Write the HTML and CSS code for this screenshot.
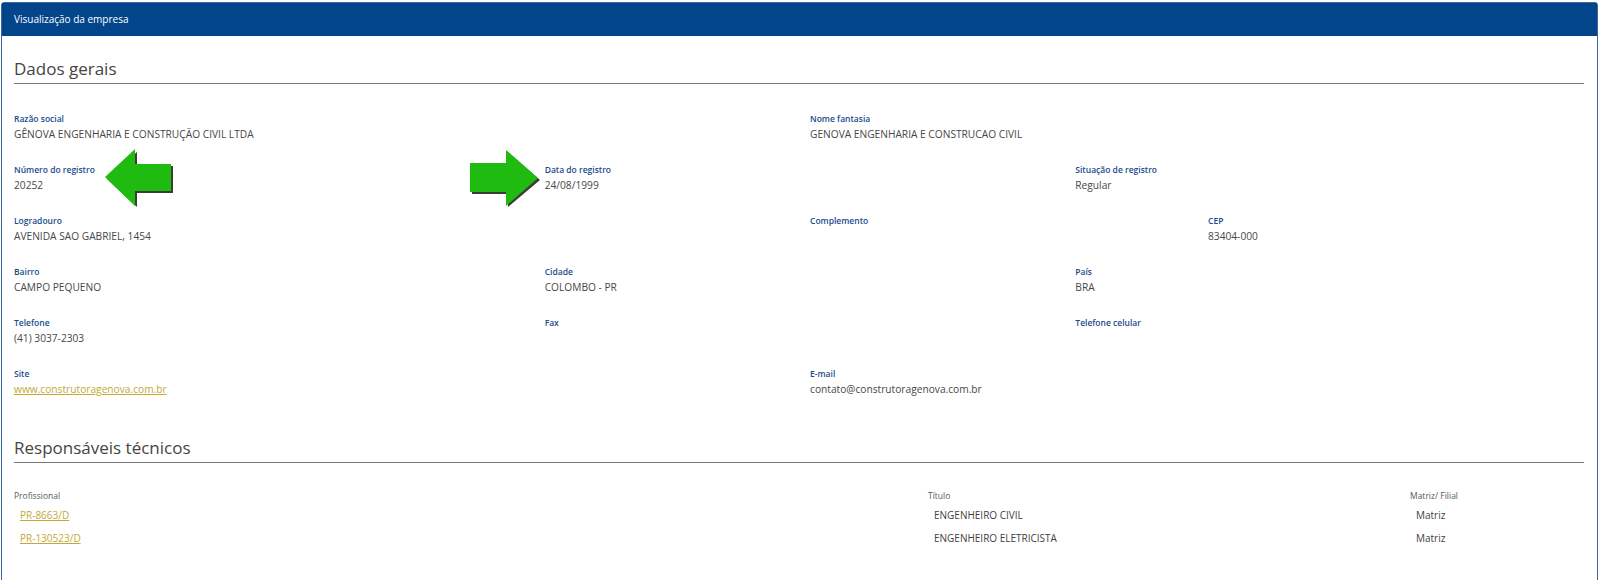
FILE: index.html
```html
<!DOCTYPE html>
<html lang="pt-BR">
  <head>
    <meta charset="UTF-8">
    <title>Visualização da empresa</title>
    <link rel="stylesheet" href="styles.css">
  </head>
  <body>
    <div class="panel">
      <div class="panel-heading">Visualização da empresa</div>

      <div class="panel-body">
        <h3 class="section-title">Dados gerais</h3>

        <div class="row">
          <div class="field col-6">
            <span class="label">Razão social</span>
            <span class="value">GÊNOVA ENGENHARIA E CONSTRUÇÃO CIVIL LTDA</span>
          </div>
          <div class="field col-6">
            <span class="label">Nome fantasia</span>
            <span class="value">GENOVA ENGENHARIA E CONSTRUCAO CIVIL</span>
          </div>
        </div>

        <div class="row">
          <div class="field col-4">
            <span class="label">Número do registro</span>
            <span class="value">20252</span>
          </div>
          <div class="field col-4">
            <span class="label">Data do registro</span>
            <span class="value">24/08/1999</span>
          </div>
          <div class="field col-4">
            <span class="label">Situação de registro</span>
            <span class="value">Regular</span>
          </div>
        </div>

        <div class="row">
          <div class="field col-6">
            <span class="label">Logradouro</span>
            <span class="value">AVENIDA SAO GABRIEL, 1454</span>
          </div>
          <div class="field col-3">
            <span class="label">Complemento</span>
            <span class="value"></span>
          </div>
          <div class="field col-3">
            <span class="label">CEP</span>
            <span class="value">83404-000</span>
          </div>
        </div>

        <div class="row">
          <div class="field col-4">
            <span class="label">Bairro</span>
            <span class="value">CAMPO PEQUENO</span>
          </div>
          <div class="field col-4">
            <span class="label">Cidade</span>
            <span class="value">COLOMBO - PR</span>
          </div>
          <div class="field col-4">
            <span class="label">País</span>
            <span class="value">BRA</span>
          </div>
        </div>

        <div class="row">
          <div class="field col-4">
            <span class="label">Telefone</span>
            <span class="value">(41) 3037-2303</span>
          </div>
          <div class="field col-4">
            <span class="label">Fax</span>
            <span class="value"></span>
          </div>
          <div class="field col-4">
            <span class="label">Telefone celular</span>
            <span class="value"></span>
          </div>
        </div>

        <div class="row">
          <div class="field col-6">
            <span class="label">Site</span>
            <span class="value"><a href="#">www.construtoragenova.com.br</a></span>
          </div>
          <div class="field col-6">
            <span class="label">E-mail</span>
            <span class="value">contato@construtoragenova.com.br</span>
          </div>
        </div>

        <h3 class="section-title section-title--spaced">Responsáveis técnicos</h3>

        <table class="tech-table">
          <thead>
            <tr>
              <th class="col-prof">Profissional</th>
              <th class="col-title">Título</th>
              <th>Matriz/ Filial</th>
            </tr>
          </thead>
          <tbody>
            <tr>
              <td><a href="#">PR-8663/D</a></td>
              <td>ENGENHEIRO CIVIL</td>
              <td>Matriz</td>
            </tr>
            <tr>
              <td><a href="#">PR-130523/D</a></td>
              <td>ENGENHEIRO ELETRICISTA</td>
              <td>Matriz</td>
            </tr>
          </tbody>
        </table>
      </div>

      <!-- annotation arrows pasted over the screenshot -->
      <svg class="arrow arrow-left" width="76" height="66" viewBox="0 0 76 66">
        <polygon points="6,33 36,6 36,20 72,20 72,47 36,47 36,61" fill="#3a3f33"/>
        <polygon points="4,31 34,3 34,18 70,18 70,45 34,45 34,60" fill="#1fbb10"/>
      </svg>
      <svg class="arrow arrow-right" width="76" height="66" viewBox="0 0 76 66">
        <polygon points="6,19 42,19 42,6 74,34 42,61 42,48 6,48" fill="#3a3f33"/>
        <polygon points="4,17 40,17 40,4 72,32 40,60 40,46 4,46" fill="#1fbb10"/>
      </svg>
    </div>
  </body>
</html>
```

FILE: styles.css
```css
html {
  box-sizing: border-box;
  font-family: "Open Sans", "Noto Sans", sans-serif;
}

*,
*:before,
*:after {
  box-sizing: inherit;
}

body {
  background: #fff;
  margin: 0;
}

.panel {
  border: 1px solid #3b67a0;
  border-radius: 3px 3px 0 0;
  margin: 2px 2px 0 1px;
  min-height: 640px;
  position: relative;
}

.panel-heading {
  background: #02458b;
  color: #fff;
  font-size: 10px;
  height: 33px;
  line-height: 33px;
  padding: 0 12px;
}

.panel-body {
  padding: 21px 13px 40px 12px;
}

.section-title {
  border-bottom: 1px solid #777;
  color: #454545;
  font-size: 17px;
  font-weight: 400;
  line-height: 24px;
  margin: 0 0 28px;
  padding-bottom: 2px;
}

/* margins collapse with the row above, so this is the real gap */
.section-title--spaced {
  margin: 39px 0 24px;
}

.row {
  display: grid;
  grid-template-columns: repeat(12, 1fr);
  margin: 0 0 21px -15px;
  width: 1592px;
}

.col-3 {
  grid-column: span 3;
}

.col-4 {
  grid-column: span 4;
}

.col-6 {
  grid-column: span 6;
}

.field {
  padding: 0 15px;
}

.label {
  color: #1b4c8c;
  display: block;
  font-size: 8.5px;
  font-weight: 600;
  line-height: 14px;
}

.value {
  color: #474747;
  display: block;
  font-size: 10.2px;
  line-height: 16px;
  min-height: 16px;
}

a {
  color: #c4a833;
}

.tech-table {
  border-collapse: collapse;
  width: 100%;
}

.tech-table th {
  color: #5a5a5a;
  font-size: 8.5px;
  font-weight: 400;
  line-height: 17px;
  padding: 0;
  text-align: left;
}

.tech-table .col-prof {
  width: 914px;
}

.tech-table .col-title {
  width: 482px;
}

.tech-table td {
  color: #3f3f3f;
  font-size: 10px;
  line-height: 15px;
  padding: 4px 5px 4px 6px;
}

.arrow {
  position: absolute;
}

.arrow-left {
  left: 99px;
  top: 143px;
}

.arrow-right {
  left: 464px;
  top: 143px;
}
```
